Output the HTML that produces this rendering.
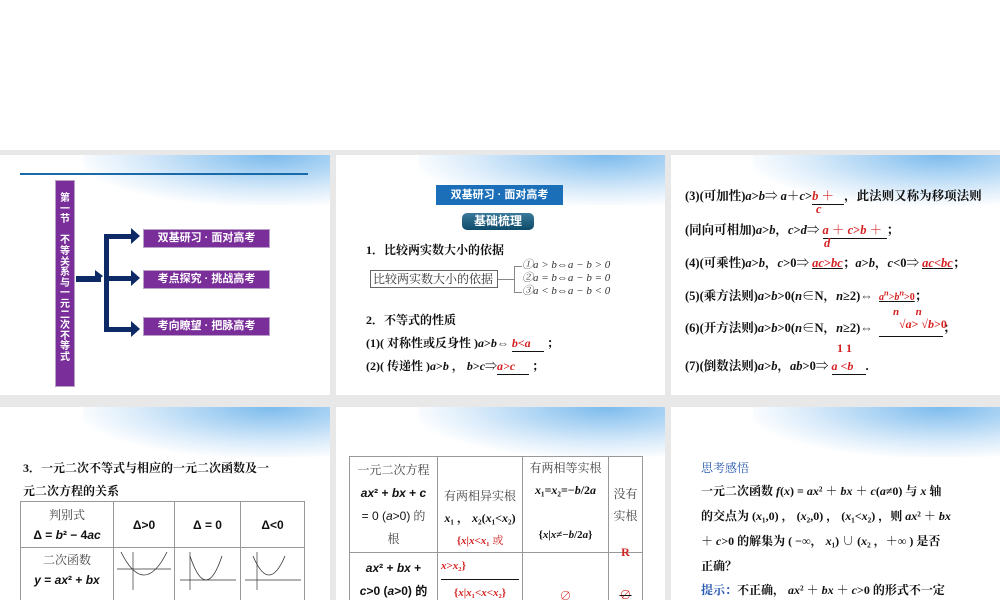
<!DOCTYPE html>
<html><head><meta charset="utf-8"><style>
*{margin:0;padding:0;box-sizing:border-box}
body{width:1000px;height:600px;background:#fff;position:relative;overflow:hidden;font-family:"Liberation Serif","Noto Serif CJK SC","Noto Sans CJK SC",serif;color:#111}
.band{position:absolute;left:0;top:150px;width:1000px;height:450px;background:#e8e8e8}
.s{position:absolute;background:#fff;overflow:hidden}
.sw2{position:absolute;left:25%;top:-12px;width:95%;height:62px;background:radial-gradient(ellipse at 60% 20%,rgba(110,180,235,.9),rgba(180,215,245,.5) 50%,rgba(255,255,255,0) 75%)}
.a{position:absolute;white-space:nowrap}
.b{font-weight:bold;font-size:12px}
.sans{font-family:"Liberation Sans","Noto Sans CJK SC",sans-serif}
.r{color:#d42020}
.pb{position:absolute;background:#7a2e9a;color:#fff;font-family:"Liberation Sans","Noto Sans CJK SC",sans-serif;font-weight:bold;font-size:11px;text-align:center;border:1px solid #b8a0c8}
.nav{position:absolute;background:#0e2a66}
table{border-collapse:collapse;position:absolute}
td{border:1px solid #999;text-align:center;font-size:12px}
.s3 .b{font-size:12.5px}
</style></head><body>
<div class="band"></div>

<!-- Slide 1 -->
<div class="s" style="left:0;top:155px;width:330px;height:240px">
<div class="sw2"></div>
<div class="a" style="left:20px;top:18px;width:288px;height:2px;background:#1a6aa8"></div>
<div class="pb" style="left:55px;top:25px;width:20px;height:207px;font-size:10px;line-height:10.6px;padding-top:13px">第<br>一<br>节<br><br>不<br>等<br>关<br>系<br>与<br>一<br>元<br>二<br>次<br>不<br>等<br>式</div>
<div class="nav" style="left:76px;top:121px;width:25px;height:6px"></div>
<div class="nav" style="left:104px;top:79px;width:5px;height:97px"></div>
<div class="nav" style="left:104px;top:79px;width:30px;height:5px"></div>
<div class="nav" style="left:104px;top:121px;width:30px;height:5px"></div>
<div class="nav" style="left:104px;top:172px;width:30px;height:5px"></div>
<svg class="a" style="left:95px;top:70px" width="50" height="115"><g fill="#0e2a66"><polygon points="0,45 8,51 0,57"/><polygon points="36,3 45,11 36,19"/><polygon points="36,45 45,53 36,61"/><polygon points="36,96 45,104 36,112"/></g></svg>
<div class="pb" style="left:143px;top:74px;width:127px;height:19px;line-height:17px">双基研习 · 面对高考</div>
<div class="pb" style="left:143px;top:115px;width:127px;height:19px;line-height:17px">考点探究 · 挑战高考</div>
<div class="pb" style="left:143px;top:162px;width:127px;height:19px;line-height:17px">考向瞭望 · 把脉高考</div>
</div>

<!-- Slide 2 -->
<div class="s" style="left:336px;top:155px;width:329px;height:240px">
<div class="sw2"></div>
<div class="a sans" style="left:100px;top:30px;width:127px;height:20px;background:#1a6fb8;color:#fff;font-weight:bold;font-size:11px;text-align:center;line-height:20px">双基研习 · 面对高考</div>
<div class="a sans" style="left:126px;top:58px;width:72px;height:17px;background:linear-gradient(#3a7a9a,#0e4a6a);border-radius:5px;color:#fff;font-weight:bold;font-size:12px;text-align:center;line-height:17px">基础梳理</div>
<div class="a b" style="left:30px;top:86px">1．比较两实数大小的依据</div>
<div class="a" style="left:34px;top:115px;width:128px;height:18px;border:1px solid #666;font-size:12px;line-height:16px;padding-left:2px;color:#333">比较两实数大小的依据</div>
<div class="a" style="left:162px;top:124px;width:16px;border-top:1px solid #888"></div>
<div class="a" style="left:178px;top:111px;width:8px;height:27px;border:1px solid #888;border-right:0"></div>
<div class="a" style="left:186px;top:104px;font-size:11px;line-height:13px;color:#333;font-style:italic">①a &gt; b⇔a − b &gt; 0<br>②a = b⇔a − b = 0<br>③a &lt; b⇔a − b &lt; 0</div>
<div class="a b" style="left:30px;top:156px">2．不等式的性质</div>
<div class="a b" style="left:30px;top:179px">(1)( 对称性或反身性 )<i>a</i>&gt;<i>b</i>⇔ <span style="display:inline-block;width:32px;border-bottom:1px solid #111"><i class="r">b&lt;a</i></span> ；</div>
<div class="a b" style="left:30px;top:202px">(2)( 传递性 )<i>a</i>&gt;<i>b</i> ， <i>b</i>&gt;<i>c</i>⇒<span style="display:inline-block;width:32px;border-bottom:1px solid #111"><i class="r">a&gt;c</i></span> ；</div>
</div>

<!-- Slide 3 -->
<div class="s s3" style="left:671px;top:155px;width:329px;height:240px">
<div class="sw2"></div>
<div class="a b" style="left:14px;top:31px">(3)(可加性)<i>a</i>&gt;<i>b</i>⇒ <i>a</i>＋<i>c</i>&gt;<span class="r" style="display:inline-block;width:32px;border-bottom:1px solid #111"><i>b</i> ＋</span>，此法则又称为移项法则</div>
<div class="a b r" style="left:145px;top:47px"><i>c</i></div>
<div class="a b" style="left:14px;top:65px">(同向可相加)<i>a</i>&gt;<i>b</i>，<i>c</i>&gt;<i>d</i>⇒ <span class="r" style="display:inline-block;width:64px;border-bottom:1px solid #111"><i>a</i> ＋ <i>c</i>&gt;<i>b</i> ＋</span>；</div>
<div class="a b r" style="left:153px;top:81px"><i>d</i></div>
<div class="a b" style="left:14px;top:98px">(4)(可乘性)<i>a</i>&gt;<i>b</i>，<i>c</i>&gt;0⇒ <span class="r" style="text-decoration:underline #111"><i>ac</i>&gt;<i>bc</i></span>；<i>a</i>&gt;<i>b</i>，<i>c</i>&lt;0⇒ <span class="r" style="text-decoration:underline #111"><i>ac</i>&lt;<i>bc</i></span>；</div>
<div class="a b" style="left:14px;top:131px">(5)(乘方法则)<i>a</i>&gt;<i>b</i>&gt;0(<i>n</i>∈N，<i>n</i>≥2)⇔ &nbsp;<span class="r" style="text-decoration:underline #111;font-size:10px"><i>a<sup>n</sup></i>&gt;<i>b<sup>n</sup></i>&gt;0</span>；</div>
<div class="a b" style="left:14px;top:163px">(6)(开方法则)<i>a</i>&gt;<i>b</i>&gt;0(<i>n</i>∈N，<i>n</i>≥2)⇔ &nbsp;<span style="display:inline-block;width:64px;border-bottom:1px solid #111">&nbsp;</span>；</div>
<div class="a b r" style="left:222px;top:151px;font-size:11px"><i>n</i>&nbsp;&nbsp;&nbsp;&nbsp;&nbsp;&nbsp;<i>n</i></div>
<div class="a b r" style="left:228px;top:162px;font-size:12px">√<i>a</i>&gt; √<i>b</i>&gt;0</div>
<div class="a b r" style="left:166px;top:186px;font-size:12px">1 1</div>
<div class="a b" style="left:14px;top:201px">(7)(倒数法则)<i>a</i>&gt;<i>b</i>，<i>ab</i>&gt;0⇒ <span class="r" style="display:inline-block;width:34px;border-bottom:1px solid #111;font-size:12px"><i>a</i> &lt;<i>b</i></span>.</div>
</div>

<!-- Slide 4 -->
<div class="s" style="left:0;top:407px;width:330px;height:193px">
<div class="sw2"></div>
<div class="a b" style="left:23px;top:52px">3．一元二次不等式与相应的一元二次函数及一</div>
<div class="a b" style="left:23px;top:75px">元二次方程的关系</div>
<table style="left:20px;top:94px;width:285px">
<tr style="height:46px"><td style="width:93px;color:#444;font-size:12px;line-height:20px">判别式<br><b class="sans" style="color:#111">Δ = <i>b</i>² − 4<i>ac</i></b></td><td class="sans b" style="width:61px">Δ&gt;0</td><td class="sans b" style="width:66px">Δ = 0</td><td class="sans b">Δ&lt;0</td></tr>
<tr style="height:60px;vertical-align:top"><td style="color:#444;line-height:20px;padding-top:2px">二次函数<br><b class="sans" style="color:#111"><i>y</i> = <i>ax</i>² + <i>bx</i></b></td>
<td><svg width="58" height="42"><line x1="2" y1="21" x2="56" y2="21" stroke="#333" stroke-width=".7"/><line x1="18" y1="4" x2="18" y2="42" stroke="#333" stroke-width=".7"/><path d="M6 4 Q 29 50 52 4" fill="none" stroke="#333" stroke-width=".8"/></svg></td>
<td><svg width="60" height="42"><line x1="2" y1="32" x2="58" y2="32" stroke="#333" stroke-width=".7"/><line x1="12" y1="4" x2="12" y2="42" stroke="#333" stroke-width=".7"/><path d="M12 8 Q 28 56 44 8" fill="none" stroke="#333" stroke-width=".8"/></svg></td>
<td><svg width="60" height="42"><line x1="2" y1="32" x2="58" y2="32" stroke="#333" stroke-width=".7"/><line x1="14" y1="4" x2="14" y2="42" stroke="#333" stroke-width=".7"/><path d="M10 8 Q 26 46 42 8" fill="none" stroke="#333" stroke-width=".8"/></svg></td></tr>
</table>
</div>

<!-- Slide 5 -->
<div class="s" style="left:336px;top:407px;width:329px;height:193px">
<div class="sw2"></div>
<table style="left:13px;top:49px;width:294px">
<tr style="height:92px"><td style="width:88px;line-height:23px;color:#444">一元二次方程<br><b class="sans" style="color:#111"><i>ax</i>² + <i>bx</i> + <i>c</i></b><br><span class="sans" style="color:#111">= 0 (<i>a</i>&gt;0)</span> 的<br>根</td>
<td style="width:85px;line-height:22px;color:#444;vertical-align:top;padding-top:28px">有两相异实根<br><b style="color:#111"><i>x</i>₁ ， <i>x</i>₂(<i>x</i>₁&lt;<i>x</i>₂)</b><br><span class="r" style="font-size:11px"><b>{<i>x</i>|<i>x</i>&lt;<i>x</i>₁</b> 或</span></td>
<td style="width:86px;vertical-align:top;line-height:22px;color:#444">有两相等实根<br><b style="color:#111"><i>x</i>₁=<i>x</i>₂=−<i>b</i>/2<i>a</i></b><br><br><b style="color:#111;font-size:11px">{<i>x</i>|<i>x</i>≠−<i>b</i>/2<i>a</i>}</b></td>
<td style="color:#444;line-height:22px">没有<br>实根</td></tr>
<tr style="height:60px;vertical-align:top"><td class="sans b" style="line-height:23px;padding-top:4px"><i>ax</i>² + <i>bx</i> +<br><i>c</i>&gt;0 (<i>a</i>&gt;0) 的</td>
<td class="b r" style="line-height:26px;font-size:11px"><span style="display:inline-block;width:78px;border-bottom:1px solid #111;text-align:left"><i>x</i>&gt;<i>x</i>₂}</span><br>{<i>x</i>|<i>x</i>₁&lt;<i>x</i>&lt;<i>x</i>₂}</td>
<td class="r" style="padding-top:34px">∅</td>
<td class="r b"><span style="position:relative;top:-8px">R</span><br><span style="position:relative;top:18px;text-decoration:line-through #111">∅</span></td></tr>
</table>
</div>

<!-- Slide 6 -->
<div class="s" style="left:671px;top:407px;width:329px;height:193px">
<div class="sw2"></div>
<div class="a" style="left:30px;top:52px;font-size:12px;color:#2a5ab0">思考感悟</div>
<div class="a b" style="left:30px;top:75px">一元二次函数 <i>f</i>(<i>x</i>) = <i>ax</i>² ＋ <i>bx</i> ＋ <i>c</i>(<i>a</i>≠0) 与 <i>x</i> 轴</div>
<div class="a b" style="left:30px;top:100px">的交点为 (<i>x</i>₁,0) ， (<i>x</i>₂,0) ， (<i>x</i>₁&lt;<i>x</i>₂) ，则 <i>ax</i>² ＋ <i>bx</i></div>
<div class="a b" style="left:30px;top:125px">＋ <i>c</i>&gt;0 的解集为 ( −∞， <i>x</i>₁) ∪ (<i>x</i>₂ ，＋∞ ) 是否</div>
<div class="a b" style="left:30px;top:150px">正确？</div>
<div class="a b" style="left:30px;top:174px"><span style="color:#2a5ab0">提示：</span>不正确， <i>ax</i>² ＋ <i>bx</i> ＋ <i>c</i>&gt;0 的形式不一定</div>
</div>
</body></html>
